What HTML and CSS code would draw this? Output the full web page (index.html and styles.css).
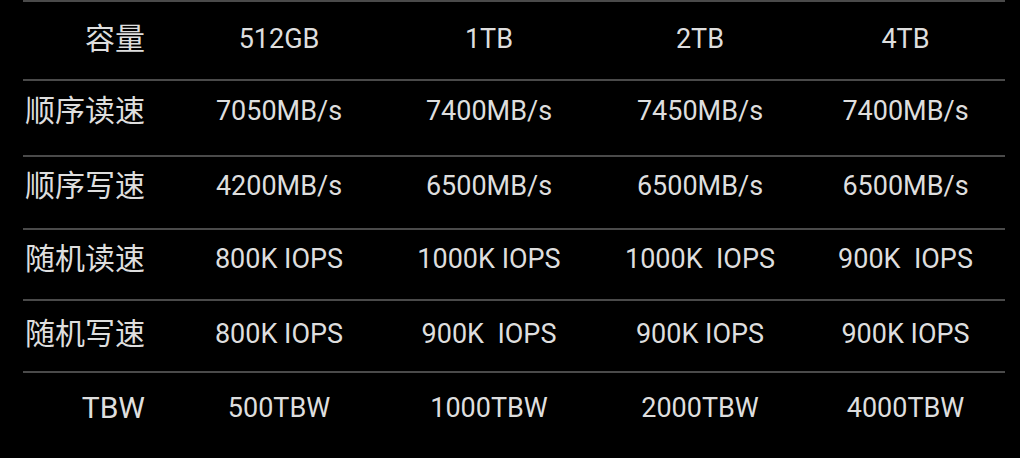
FILE: index.html
```html
<!DOCTYPE html>
<html lang="zh">
<head>
<meta charset="utf-8">
<title>规格</title>
<link rel="stylesheet" href="styles.css">
</head>
<body>
<div class="spec">
  <div class="row r1">
    <div class="label">容量</div>
    <div class="val">512GB</div>
    <div class="val">1TB</div>
    <div class="val">2TB</div>
    <div class="val">4TB</div>
  </div>
  <div class="row r2">
    <div class="label">顺序读速</div>
    <div class="val">7050MB/s</div>
    <div class="val">7400MB/s</div>
    <div class="val">7450MB/s</div>
    <div class="val">7400MB/s</div>
  </div>
  <div class="row r3">
    <div class="label">顺序写速</div>
    <div class="val">4200MB/s</div>
    <div class="val">6500MB/s</div>
    <div class="val">6500MB/s</div>
    <div class="val">6500MB/s</div>
  </div>
  <div class="row r4">
    <div class="label">随机读速</div>
    <div class="val">800K IOPS</div>
    <div class="val">1000K IOPS</div>
    <div class="val">1000K  IOPS</div>
    <div class="val">900K  IOPS</div>
  </div>
  <div class="row r5">
    <div class="label">随机写速</div>
    <div class="val">800K IOPS</div>
    <div class="val">900K  IOPS</div>
    <div class="val">900K IOPS</div>
    <div class="val">900K IOPS</div>
  </div>
  <div class="row r6">
    <div class="label">TBW</div>
    <div class="val">500TBW</div>
    <div class="val">1000TBW</div>
    <div class="val">2000TBW</div>
    <div class="val">4000TBW</div>
  </div>
</div>
</body>
</html>
```

FILE: styles.css
```css
html, body {
  margin: 0;
  padding: 0;
  background: #000;
  width: 1020px;
  height: 458px;
  overflow: hidden;
}

.spec {
  margin-left: 23px;
  width: 982px;
  color: #dedede;
  font-family: Roboto, "Noto Sans CJK SC", sans-serif;
}

.row {
  display: grid;
  grid-template-columns: 151px 210px 210px 212px 199px;
  align-items: start;
  border-top: 2px solid #4a4a4a;
  box-sizing: border-box;
}

.r1 { height: 79px; padding-top: 22px; }
.r2 { height: 76px; padding-top: 15px; }
.r3 { height: 73px; padding-top: 14px; }
.r4 { height: 71px; padding-top: 14px; }
.r5 { height: 72px; padding-top: 18px; }
.r6 { height: 87px; padding-top: 20px; }

.label {
  text-align: right;
  padding-right: 29px;
  font-size: 30px;
  line-height: 30px;
}

.val {
  text-align: center;
  font-size: 27px;
  line-height: 30px;
  white-space: pre;
}
```
